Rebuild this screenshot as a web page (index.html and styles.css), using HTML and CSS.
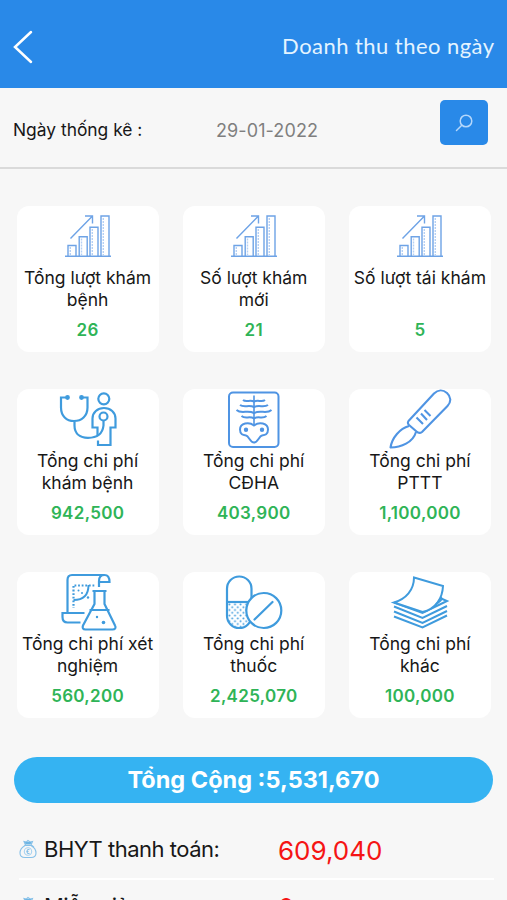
FILE: index.html
```html
<!DOCTYPE html>
<html lang="vi">
<head>
    <meta charset="UTF-8">
    <meta name="viewport" content="width=device-width, initial-scale=1.0">
    <title>Doanh thu theo ngày</title>
    <link rel="stylesheet" href="styles.css">
</head>
<body>
    <svg width="0" height="0" class="defs">
        <symbol id="icon-chart" viewBox="37.5 16 100 62">
            <g fill="none" stroke="#6ea3e6" stroke-width="1.4">
                <path d="M64.5 66.3h46M67.5 66V55.5h8V66M78.7 66V46.7h8V66M89.5 66V37.3h8V66M100.5 66V26h8v40"/>
                <path d="M70 48.5L91.5 26.5M84.5 26h7.5v7.5"/>
                <path d="M69.8 57v8M81 48.5v16.5M91.8 39v26M102.8 28v37" stroke="#b5d0f4" stroke-dasharray="2 1"/>
            </g>
        </symbol>
        <symbol id="icon-bag" viewBox="0 0 18 20">
            <g fill="none" stroke="#86c0e8" stroke-width="1.1">
                <path d="M6 6.5C2.5 8.5 1 11.5 1 14c0 3 2 4.5 5 4.5h6c3 0 5-1.5 5-4.5 0-2.5-1.5-5.5-5-7.5z"/>
                <path d="M5.5 6.5h7.5M6.5 6L5 2.5l2.5.5L9 1.5l2 1.5 2.5-.5L12 6M13 6.5l2 2"/>
                <circle cx="9" cy="12.5" r="3.7" stroke="#a9d3f0"/>
                <path d="M10.5 10.8c-1.5-.8-2.5 0-2.5 1.7s1 2.5 2.5 1.7M7.3 12.5H9.5"/>
            </g>
            <path d="M6 3h6.5l-1 2.5h-5z" fill="#6db5e4"/>
        </symbol>
    </svg>

    <header class="header">
        <svg class="back" viewBox="0 0 20 34"><path d="M18 2L2 17l16 15" fill="none" stroke="#fff" stroke-width="2.5" stroke-linecap="round"/></svg>
        <h1>Doanh thu theo ngày</h1>
    </header>

    <div class="filter">
        <span class="filter-label">Ngày thống kê :</span>
        <span class="filter-date">29-01-2022</span>
        <button class="search">
            <svg viewBox="0 0 18 18"><g fill="none" stroke="#b4d7fb" stroke-width="1.5" stroke-linecap="round"><circle cx="11" cy="7" r="5.8"/><path d="M6.8 11.2L1.5 16.5"/></g></svg>
        </button>
    </div>

    <main class="cards">
        <div class="card">
            <svg class="icon"><use href="#icon-chart"/></svg>
            <p class="name">Tổng lượt khám bệnh</p>
            <p class="value">26</p>
        </div>
        <div class="card">
            <svg class="icon"><use href="#icon-chart"/></svg>
            <p class="name">Số lượt khám<br>mới</p>
            <p class="value">21</p>
        </div>
        <div class="card">
            <svg class="icon"><use href="#icon-chart"/></svg>
            <p class="name">Số lượt tái khám</p>
            <p class="value">5</p>
        </div>
        <div class="card">
            <svg class="icon" viewBox="-2.5 8.5 100 62">
                <g fill="none" stroke="#3f9bdd" stroke-width="2.2">
                    <path d="M26 17h-5.5v10c0 8.5 5.5 13.5 13 13.5S47 35.5 47 27V17h-5.5"/>
                    <circle cx="27" cy="17" r="1.3" fill="#3f9bdd"/>
                    <circle cx="41" cy="17" r="1.3" fill="#3f9bdd"/>
                    <path d="M34 41v4c0 8 5.5 12.3 13.5 12.3 9 0 14.5-3.3 15.5-12.3v-4.5"/>
                    <circle cx="63.3" cy="18.3" r="5.5"/>
                    <circle cx="63" cy="36" r="4"/>
                    <path d="M57 55v-8h-5V38c0-6 5-10.5 11.5-10.5S75 32 75 38v9h-5v17.5H57.5V60"/>
                </g>
            </svg>
            <p class="name">Tổng chi phí khám bệnh</p>
            <p class="value">942,500</p>
        </div>
        <div class="card">
            <svg class="icon" viewBox="-1 8.5 100 62">
                <g fill="none" stroke="#4f94e3" stroke-width="2">
                    <rect x="24" y="12" width="49.5" height="54.5" rx="4"/>
                    <path d="M49 15v30" stroke-width="1.6"/>
                    <path d="M38 19.5c3 2.5 7-.5 11 1.5 4-2 8 1 11-1.5M35 24.5c4 3 9-.5 14 2 5-2.5 10 1 14-2M31.5 29.5c5 4.5 11-.5 17.5 3 6.5-3.5 12.5 1.5 17.5-3M36.5 35.5c4 3.5 8-.5 12.5 2.5 4.5-3 8.5 1 12.5-2.5"/>
                    <path d="M49 45c-5-4-14-2.5-14 4 0 5 3 5.500 6 6 3 .5 4 7 8 7s5-6.500 8-7c3-.5 6-1 6-6 0-6.500-9-8-14-4z"/>
                    <circle cx="41" cy="49.3" r="1.200" fill="#4f94e3"/>
                    <circle cx="57" cy="49.3" r="1.200" fill="#4f94e3"/>
                </g>
            </svg>
            <p class="name">Tổng chi phí CĐHA</p>
            <p class="value">403,900</p>
        </div>
        <div class="card">
            <svg class="icon" viewBox="0 8.5 100 62">
                <g fill="none" stroke="#4f94e3" stroke-width="2.1" stroke-linejoin="round">
                    <path d="M38.5 40.5L64 13c4-4 9-4 13-.5s4.5 9 .5 13L52 51.5c-2 1.5-4 1-5.5-.5L39 44.5c-1-1-1.5-2.5-.5-4z"/>
                    <path d="M39 45.5C30 48 22 57 20.500 67 31 67 43 62 46 51.500"/>
                    <path d="M46.5 37l6.500 6.500M51 33l6 6.500M54.500 29.500l6 6"/>
                </g>
            </svg>
            <p class="name">Tổng chi phí PTTT</p>
            <p class="value">1,100,000</p>
        </div>
        <div class="card">
            <svg class="icon" viewBox="-2.5 7 100 62">
                <g fill="none" stroke="#3f9bdd" stroke-width="2.2">
                    <path d="M27 48V15c0-3 1.5-5 4.500-5H63M58.500 22v-6c0-4 2-6 5.500-6s5 2.500 5 7H59"/>
                    <path d="M44 48H22v4c0 4 1.500 5.500 5 5.500h13"/>
                    <path d="M52 26h14M54 26v13L42.500 60.500c-1 2.500 0 4 2.500 4h27c2.500 0 4-1.500 2.500-4L64 39V26M49 45h20"/>
                    <path d="M33 35c10 0 15-5 15-15" stroke-width="1.9"/>
                    <path d="M33 21v22M34 20.5h20" stroke-dasharray="1.8 1.8"/>
                </g>
                <g fill="#3f9bdd">
                    <circle cx="38" cy="25.5" r="1"/>
                    <circle cx="41.5" cy="28" r="1"/>
                    <circle cx="47.5" cy="32.5" r="1.2"/>
                    <circle cx="56.5" cy="52" r="1.2"/>
                    <circle cx="63" cy="57.5" r="1.8"/>
                </g>
            </svg>
            <p class="name">Tổng chi phí xét nghiệm</p>
            <p class="value">560,200</p>
        </div>
        <div class="card">
            <svg class="icon" viewBox="-1 7 100 62">
                <defs>
                    <pattern id="dots" width="5.6" height="5.6" patternUnits="userSpaceOnUse" x="23" y="38">
                        <circle cx="1.4" cy="1.4" r="1" fill="#3f9bdd"/>
                        <circle cx="4.2" cy="4.2" r="1" fill="#3f9bdd"/>
                    </pattern>
                </defs>
                <path d="M22 38h25v13c0 17-25 17-25 0z" fill="url(#dots)"/>
                <g fill="none" stroke="#3f9bdd" stroke-width="2.2">
                    <rect x="22" y="11.5" width="24.5" height="51.5" rx="12.25"/>
                    <path d="M22 37h24"/>
                    <circle cx="58.8" cy="45.5" r="17.5" fill="#fff"/>
                    <path d="M49.5 54.5l18-17.5" stroke-linecap="round"/>
                </g>
            </svg>
            <p class="name">Tổng chi phí thuốc</p>
            <p class="value">2,425,070</p>
        </div>
        <div class="card">
            <svg class="icon" viewBox="0 7 100 62">
                <g fill="none" stroke="#3f9bdd" stroke-width="2">
                    <path d="M70 33l7 3-24.5 12L24 37.5M24 41.5L52.5 53 77 41M24 46.5L52.5 58 77 46M24 51.5L52.5 62.5 77 50.5"/>
                    <path d="M44 12.5l29 8.5c-.5 12-7 23-20.5 26L24 37.5C36 34 44 25 44 12.5z" fill="#fff"/>
                    <path d="M71 32c2 3-2 5-5 7"/>
                </g>
            </svg>
            <p class="name">Tổng chi phí khác</p>
            <p class="value">100,000</p>
        </div>
    </main>

    <div class="total">Tổng Cộng :5,531,670</div>

    <section class="details">
        <div class="detail">
            <svg class="bag"><use href="#icon-bag"/></svg>
            <span class="detail-name">BHYT thanh toán:</span>
            <span class="detail-value">609,040</span>
        </div>
        <div class="detail">
            <svg class="bag"><use href="#icon-bag"/></svg>
            <span class="detail-name">Miễn giảm:</span>
            <span class="detail-value">0</span>
        </div>
    </section>
</body>
</html>
```
FILE: styles.css
```css
* {
    box-sizing: border-box;
}
body {
    margin: 0;
    height: 900px;
    overflow: hidden;
    background-color: #f7f7f7;
    font-family: Inter, "Noto Sans", sans-serif;
    color: #171717;
}
.defs {
    display: block;
}
.header {
    display: flex;
    align-items: center;
    justify-content: space-between;
    height: 88px;
    padding: 6px 12.5px 0 13px;
    background-color: #2989e8;
}
.header h1 {
    margin: -3px 0 0;
    font-family: Lato, sans-serif;
    font-size: 22px;
    font-weight: 400;
    letter-spacing: 0.45px;
    color: #e4f4ff;
}
.back {
    width: 20px;
    height: 34px;
}
.filter {
    display: flex;
    align-items: center;
    height: 81px;
    padding: 0 19px 0 13px;
    border-bottom: 2px solid #dadada;
    font-size: 18px;
}
.filter-label {
    width: 203px;
    padding-top: 4px;
    font-size: 17.4px;
}
.filter-date {
    flex: 1;
    padding-top: 5px;
    letter-spacing: 0.1px;
    color: #7f7f7f;
}
.search {
    display: flex;
    align-items: center;
    justify-content: center;
    width: 48px;
    height: 45px;
    margin-bottom: 10px;
    padding: 0;
    border: none;
    border-radius: 5px;
    background-color: #2989e8;
}
.search svg {
    width: 18px;
    height: 18px;
}
.cards {
    display: grid;
    grid-template-columns: repeat(3, 1fr);
    grid-auto-rows: 146px;
    gap: 37px 24px;
    padding: 37px 16px 0 16.5px;
}
.card {
    display: flex;
    flex-direction: column;
    align-items: center;
    border-radius: 12px;
    background-color: #fff;
    text-align: center;
}
.icon {
    width: 100px;
    height: 62px;
    flex-shrink: 0;
}
.name {
    width: 136px;
    height: 43px;
    margin: -1px 0 0;
    font-size: 17.5px;
    line-height: 21.5px;
}
.value {
    margin: 9px 0 0;
    font-size: 17px;
    font-weight: 600;
    line-height: 22px;
    letter-spacing: 0.3px;
    color: #2fb457;
}
.total {
    margin: 38.5px 14px 0;
    height: 46px;
    border-radius: 23px;
    background-color: #35b3f2;
    color: #fff;
    font-size: 23.5px;
    font-weight: 700;
    line-height: 46px;
    text-align: center;
}
.details {
    padding: 20px 13px 0 19px;
}
.detail {
    display: flex;
    align-items: center;
    height: 57px;
    padding-bottom: 3px;
    border-bottom: 2px solid #fff;
}
.bag {
    width: 18px;
    height: 20px;
    margin-right: 7px;
}
.detail-name {
    width: 234px;
    font-size: 22px;
    letter-spacing: -0.5px;
}
.detail-value {
    padding-top: 4px;
    font-size: 26px;
    color: #f51414;
}
```
